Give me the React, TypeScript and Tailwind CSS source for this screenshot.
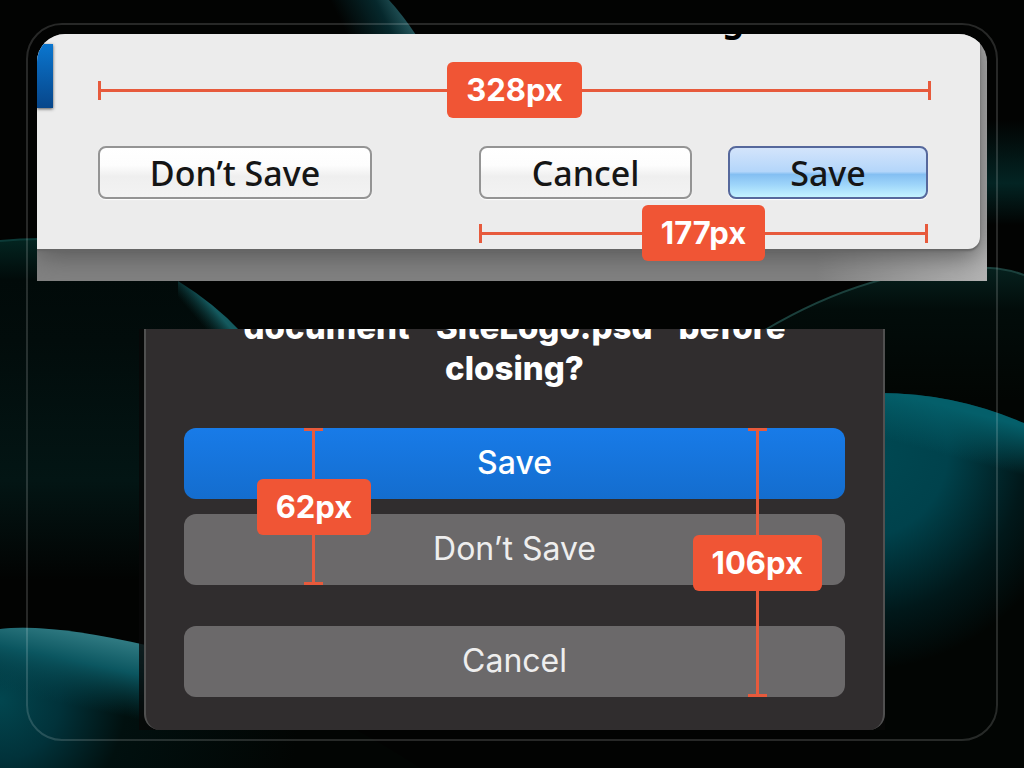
import { clsx } from 'clsx';

// Glossy wallpaper behind the two dialogs
const Wallpaper = () => (
  <svg
    className="absolute inset-0 h-full w-full"
    viewBox="0 0 1024 768"
    preserveAspectRatio="none"
    aria-hidden="true"
  >
    <defs>
      <linearGradient id="left-orb" x1="0" y1="240" x2="0" y2="640" gradientUnits="userSpaceOnUse">
        <stop offset="0" stopColor="#032420" />
        <stop offset="0.1" stopColor="#010a09" />
        <stop offset="0.25" stopColor="#020c0b" />
        <stop offset="0.6" stopColor="#031514" />
        <stop offset="0.85" stopColor="#020302" />
        <stop offset="1" stopColor="#020302" />
      </linearGradient>
      <linearGradient id="left-rim" x1="194" y1="316" x2="209" y2="303" gradientUnits="userSpaceOnUse">
        <stop offset="0" stopColor="#0b3b3c" stopOpacity="0" />
        <stop offset="1" stopColor="#14595e" />
      </linearGradient>
      <radialGradient id="bottom-orb" cx="0" cy="700" r="300" gradientUnits="userSpaceOnUse">
        <stop offset="0" stopColor="#02464f" />
        <stop offset="0.2" stopColor="#01323a" />
        <stop offset="0.42" stopColor="#01100f" />
        <stop offset="1" stopColor="#020503" />
      </radialGradient>
      <linearGradient id="bottom-rim" x1="60" y1="628" x2="45" y2="700" gradientUnits="userSpaceOnUse">
        <stop offset="0" stopColor="#2f7981" />
        <stop offset="0.4" stopColor="#0b5660" />
        <stop offset="1" stopColor="#02424b" stopOpacity="0" />
      </linearGradient>
      <radialGradient id="right-orb" cx="860" cy="450" r="220" gradientUnits="userSpaceOnUse">
        <stop offset="0" stopColor="#004953" />
        <stop offset="0.4" stopColor="#00424c" />
        <stop offset="0.75" stopColor="#01181a" />
        <stop offset="1" stopColor="#020503" />
      </radialGradient>
      <linearGradient id="right-rim" x1="900" y1="394" x2="888" y2="440" gradientUnits="userSpaceOnUse">
        <stop offset="0" stopColor="#045f6a" />
        <stop offset="1" stopColor="#045f6a" stopOpacity="0" />
      </linearGradient>
      <linearGradient id="top-orb" x1="345" y1="30" x2="405" y2="0" gradientUnits="userSpaceOnUse">
        <stop offset="0" stopColor="#020302" />
        <stop offset="0.6" stopColor="#06282c" />
        <stop offset="1" stopColor="#2c6268" />
      </linearGradient>
      <linearGradient id="far-orb" x1="0" y1="270" x2="0" y2="400" gradientUnits="userSpaceOnUse">
        <stop offset="0" stopColor="#06201d" />
        <stop offset="0.3" stopColor="#020c0a" />
        <stop offset="1" stopColor="#020503" />
      </linearGradient>
      <linearGradient id="glow" x1="0" y1="120" x2="0" y2="225" gradientUnits="userSpaceOnUse">
        <stop offset="0" stopColor="#032423" stopOpacity="0" />
        <stop offset="0.6" stopColor="#032423" />
        <stop offset="1" stopColor="#032423" stopOpacity="0" />
      </linearGradient>
    </defs>
    <rect width="1024" height="768" fill="#020302" />
    <path d="M300 0H389Q402 14 416 35H300Z" fill="url(#top-orb)" />
    <rect x="980" y="120" width="44" height="120" fill="url(#glow)" />
    <path d="M0 241Q100 231 178 281Q215 304 240 331L240 640H0Z" fill="url(#left-orb)" />
    <path d="M178 281Q215 304 240 331H178Z" fill="url(#left-rim)" />
    <path d="M0 241Q20 239 40 239" fill="none" stroke="#0c3a37" strokeWidth="2" />
    <path d="M765 330Q880 262 990 268Q1008 269 1024 275V600H765Z" fill="url(#far-orb)" />
    <path d="M765 330Q880 262 990 268Q1008 269 1024 275" fill="none" stroke="#1b403c" strokeWidth="2" />
    <path d="M870 393Q950 391 1024 423V768H870Z" fill="url(#right-orb)" />
    <path d="M870 393Q950 391 1024 423V520H870Z" fill="url(#right-rim)" />
    <path d="M0 629Q50 623 150 646Q300 690 420 768H0Z" fill="url(#bottom-orb)" />
    <path d="M0 629Q50 623 150 646V740H0Z" fill="url(#bottom-rim)" />
  </svg>
);

type MeasureProps = {
  label: string;
  vertical?: boolean;
  className?: string;
};

// Red dimension line with end caps and a label in the middle
const Measure = ({ label, vertical, className }: MeasureProps) => (
  <div className={clsx('flex items-center', vertical && 'flex-col', className)}>
    <span className={clsx('bg-[#e75a3c]', vertical ? 'h-[3px] w-[19px]' : 'h-[19px] w-[3px]')} />
    <span className={clsx('flex-1 bg-[#e75a3c]', vertical ? 'w-[3px]' : 'h-[3px]')} />
    <span className="rounded-md bg-[#f05535] px-[19px] py-2 text-[31px] leading-10 font-bold text-white">
      {label}
    </span>
    <span className={clsx('flex-1 bg-[#e75a3c]', vertical ? 'w-[3px]' : 'h-[3px]')} />
    <span className={clsx('bg-[#e75a3c]', vertical ? 'h-[3px] w-[19px]' : 'h-[19px] w-[3px]')} />
  </div>
);

const aqua =
  'h-[53px] rounded-lg border-2 font-["Noto_Sans",sans-serif] text-[34px] leading-[48px] font-medium text-[#151515] shadow-[0_1px_1px_#ffffff]';
const aquaPlain =
  'border-[#949494] bg-[linear-gradient(#ffffff_0%,#fdfdfd_35%,#efefef_58%,#f3f3f3_100%)]';

const ClassicDialog = () => (
  <section className="overflow-hidden rounded-t-[28px] bg-[linear-gradient(90deg,#828282_0%,#828282_82%,#b4b4b4_100%)] pr-[7px] pb-8">
    <div className="relative flow-root rounded-br-xl bg-[#ececec] pr-[49px] pl-[61px] shadow-[0_2px_2px_#666,0_6px_28px_#555]">
      <span className="absolute top-[10px] left-0 h-16 w-4 bg-linear-to-b from-[#0a76cf] to-[#07468a] shadow-[0_1px_3px_#555]" />
      <h2 className="-mt-[37px] h-[45px] pl-4 font-['Noto_Sans',sans-serif] text-[34px] leading-[45px] font-bold whitespace-nowrap text-black">
        document “Untitled-1” before closing?
      </h2>
      <Measure label="328px" className="mt-5" />
      <div className="mt-7 grid grid-cols-[274fr_107fr_213fr_36fr_200fr] pr-[3px]">
        <button className={clsx(aqua, aquaPlain)}>Don’t Save</button>
        <button className={clsx(aqua, aquaPlain, 'col-start-3')}>Cancel</button>
        <button
          className={clsx(
            aqua,
            'col-start-5 border-[#56689c] bg-[linear-gradient(#d3e4fb_0%,#b4d6fa_48%,#84bff2_54%,#9ed5fa_75%,#c4f3ff_100%)]',
          )}
        >
          Save
        </button>
        <Measure label="177px" className="relative col-span-3 col-start-3 mt-[6px] -mb-3" />
      </div>
    </div>
  </section>
);

const flat = 'h-[71px] w-full rounded-xl pb-0.5 text-[32px] leading-10';

const ModernDialog = () => (
  <section className="mx-auto w-full max-w-[746px] overflow-hidden bg-[#080808]/80 pl-[5px]">
    <div className="rounded-b-2xl border-x-2 border-[#505050] bg-[#302d2e] px-[38px] pb-[33px]">
      <h2 className="-mt-[22px] text-center text-[33px] leading-[41px] font-extrabold text-white">
        document “SiteLogo.psd” before
        <br />
        closing?
      </h2>
      <div className="relative mt-[39px]">
        <button className={clsx(flat, 'bg-linear-to-b from-[#187be8] to-[#146dce] font-medium text-white')}>
          Save
        </button>
        <button className={clsx(flat, 'mt-[15px] bg-[#6b696a] text-[#eee]')}>Don’t Save</button>
        <button className={clsx(flat, 'mt-[41px] bg-[#6b696a] text-[#eee]')}>Cancel</button>
        <Measure label="62px" vertical className="absolute top-0 left-[11%] h-[157px]" />
        <Measure label="106px" vertical className="absolute top-0 right-[3.5%] h-full" />
      </div>
    </div>
  </section>
);

export default function App() {
  return (
    <main className="relative min-h-screen overflow-hidden px-[26px] pt-[23px] pb-[27px] font-[Inter,sans-serif]">
      <Wallpaper />
      <div className="relative flex flex-col gap-12 rounded-[36px] border-2 border-white/15 p-[9px]">
        <ClassicDialog />
        <ModernDialog />
      </div>
    </main>
  );
}
